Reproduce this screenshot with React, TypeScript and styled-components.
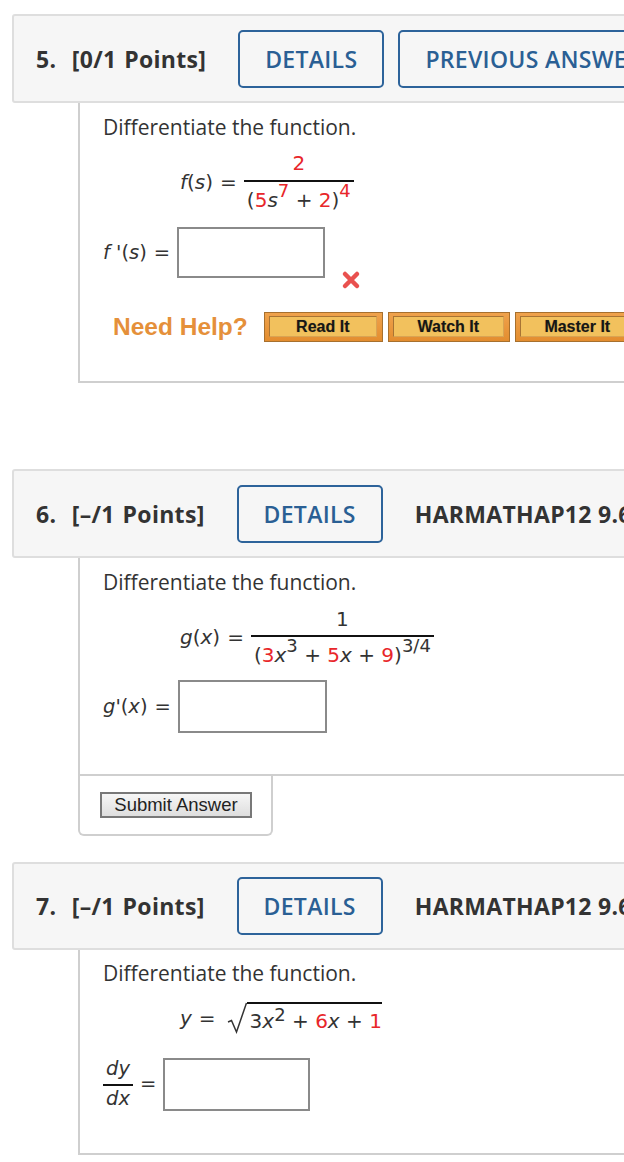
import styled, { createGlobalStyle } from "styled-components";

const GlobalStyle = createGlobalStyle`
  *, *::before, *::after { box-sizing: border-box; }
  html, body { margin: 0; padding: 0; background: #fff; overflow: hidden; }
  body { font-family: "Open Sans", "DejaVu Sans", sans-serif; color: #333; }
`;

const Page = styled.div`
  width: 900px;
  padding: 14px 0 0 12px;
  display: flex;
  flex-direction: column;
`;

const Question = styled.section<{ $after: number }>`
  display: flex;
  flex-direction: column;
  margin-bottom: ${(p) => p.$after}px;
`;

const Header = styled.header<{ $h: number }>`
  display: flex;
  align-items: center;
  height: ${(p) => p.$h}px;
  padding-left: 22px;
  background: #f6f6f6;
  border: 2px solid #dedede;
  border-radius: 3px;
  white-space: nowrap;
`;

const Title = styled.h2`
  margin: 0 32px 0 0;
  font-size: 23px;
  font-weight: 700;
  letter-spacing: 0.3px;
  word-spacing: 1.5px;
  color: #333;
  white-space: pre;
`;

const HeaderButton = styled.button`
  height: 58px;
  padding: 0 25px;
  margin-right: 14px;
  background: transparent;
  border: 2px solid #2d639a;
  border-radius: 5px;
  font-family: "Open Sans", sans-serif;
  font-size: 23px;
  font-weight: 600;
  letter-spacing: 0.3px;
  color: #2a5f94;
`;

const Source = styled.span`
  margin-left: 18px;
  font-size: 23px;
  font-weight: 700;
  letter-spacing: 0.3px;
  color: #333;
`;

const Body = styled.div<{ $top: number; $bottom: number }>`
  margin-left: 66px;
  padding: ${(p) => p.$top}px 0 ${(p) => p.$bottom}px 23px;
  border-left: 2px solid #cfcfcf;
  border-bottom: 2px solid #cfcfcf;
  display: flex;
  flex-direction: column;
`;

const Prompt = styled.p`
  margin: 0;
  font-size: 21px;
  line-height: 24px;
  color: #333;
`;

const MathRow = styled.div<{ $top: number; $indent: number }>`
  display: flex;
  align-items: center;
  margin-top: ${(p) => p.$top}px;
  padding-left: ${(p) => p.$indent}px;
  font-family: "DejaVu Sans", Verdana, sans-serif;
  font-size: 20px;
  line-height: 26px;
  color: #333;
  white-space: pre;
`;

const Eq = styled.span`
  margin: 0 7px;
`;

const V = styled.i`
  font-style: italic;
`;

const Red = styled.span`
  color: #e8262a;
`;

const Sup = styled.sup<{ $raise?: number }>`
  font-size: 18px;
  line-height: 0;
  vertical-align: ${(p) => p.$raise ?? 0.55}em;
`;

const Frac = styled.span`
  display: inline-flex;
  flex-direction: column;
  align-items: stretch;
`;

const Num = styled.span<{ $pad: number }>`
  padding: 0 3px ${(p) => p.$pad}px;
  text-align: center;
  border-bottom: 2px solid #111;
`;

const Den = styled.span<{ $pad: number }>`
  padding: ${(p) => p.$pad}px 3px 0;
  text-align: center;
`;

const Radical = styled.span`
  display: inline-flex;
  align-items: flex-end;
  margin-left: 4px;
`;

const Radicand = styled.span`
  border-top: 2px solid #111;
  padding: 4px 0 0 3px;
`;

const AnswerRow = styled.div<{ $top: number }>`
  display: flex;
  align-items: center;
  margin-top: ${(p) => p.$top}px;
  font-family: "DejaVu Sans", Verdana, sans-serif;
  font-size: 19.5px;
  line-height: 26px;
  color: #333;
  white-space: pre;
`;

const AnswerBox = styled.div<{ $w: number; $h: number }>`
  width: ${(p) => p.$w}px;
  height: ${(p) => p.$h}px;
  border: 2px solid #8a8a8a;
  background: #fff;
`;

const WrongMark = styled.svg`
  align-self: flex-end;
  margin: 0 0 -12px 16px;
`;

const HelpRow = styled.div`
  display: flex;
  align-items: center;
  margin-top: 34px;
  padding-left: 10px;
`;

const HelpLabel = styled.span`
  font-family: "Liberation Sans", Arial, sans-serif;
  font-size: 24.5px;
  font-weight: 700;
  color: #e5903a;
  margin-right: 16px;
`;

const HelpButton = styled.button<{ $w: number }>`
  display: flex;
  width: ${(p) => p.$w}px;
  height: 30px;
  margin-right: 5px;
  padding: 3px 5px 4px 4px;
  border: 1px solid #a7702e;
  background: linear-gradient(#efa24c, #e38d2f);
  flex-shrink: 0;
`;

const HelpInner = styled.span`
  flex: 1;
  display: flex;
  align-items: center;
  justify-content: center;
  border: 1px solid #a87434;
  border-right-color: #d9a453;
  border-bottom-color: #d9a453;
  background: #f2c15d;
  font-family: "Liberation Sans", Arial, sans-serif;
  font-size: 16px;
  font-weight: 700;
  color: #161616;
  text-shadow: 0 0 1px rgba(0, 0, 0, 0.3);
  white-space: nowrap;
  overflow: hidden;
`;

const Footer = styled.div`
  margin-left: 66px;
  width: 195px;
  padding: 16px 0 16px 20px;
  border: 2px solid #cfcfcf;
  border-top: none;
  border-radius: 0 0 6px 6px;
`;

const SubmitButton = styled.button`
  width: 152px;
  height: 26px;
  padding: 0;
  border: 2px solid #787878;
  background: linear-gradient(#f6f6f6, #dedede);
  font-family: "Liberation Sans", Arial, sans-serif;
  font-size: 18.5px;
  line-height: 20px;
  color: #222;
`;

export default function App() {
  return (
    <>
      <GlobalStyle />
      <Page>
        <Question $after={86}>
          <Header $h={89}>
            <Title>{"5.  [0/1 Points]"}</Title>
            <HeaderButton>DETAILS</HeaderButton>
            <HeaderButton>PREVIOUS ANSWERS</HeaderButton>
          </Header>
          <Body $top={12} $bottom={39}>
            <Prompt>Differentiate the function.</Prompt>
            <MathRow $top={11} $indent={77}>
              <V>f</V>(<V>s</V>)<Eq>=</Eq>
              <Frac>
                <Num $pad={4}>
                  <Red>2</Red>
                </Num>
                <Den $pad={5}>
                  (<Red>5</Red>
                  <V>s</V>
                  <Sup>
                    <Red>7</Red>
                  </Sup>{" "}
                  + <Red>2</Red>)
                  <Sup>
                    <Red>4</Red>
                  </Sup>
                </Den>
              </Frac>
            </MathRow>
            <AnswerRow $top={14}>
              <V>f</V> '(<V>s</V>)<Eq>=</Eq>
              <AnswerBox $w={148} $h={51} />
              <WrongMark width="20" height="20" viewBox="0 0 20 20">
                <path
                  d="M4 4 L16 16 M16 4 L4 16"
                  stroke="#e9514f"
                  strokeWidth="4.5"
                  strokeLinecap="round"
                />
              </WrongMark>
            </AnswerRow>
            <HelpRow>
              <HelpLabel>Need Help?</HelpLabel>
              <HelpButton $w={119}>
                <HelpInner>Read It</HelpInner>
              </HelpButton>
              <HelpButton $w={122}>
                <HelpInner>Watch It</HelpInner>
              </HelpButton>
              <HelpButton $w={126}>
                <HelpInner>Master It</HelpInner>
              </HelpButton>
            </HelpRow>
          </Body>
        </Question>

        <Question $after={26}>
          <Header $h={89}>
            <Title>{"6.  [–/1 Points]"}</Title>
            <HeaderButton>DETAILS</HeaderButton>
            <Source>HARMATHAP12 9.6.013.</Source>
          </Header>
          <Body $top={12} $bottom={41}>
            <Prompt>Differentiate the function.</Prompt>
            <MathRow $top={12} $indent={77}>
              <V>g</V>(<V>x</V>)<Eq>=</Eq>
              <Frac>
                <Num $pad={3}>1</Num>
                <Den $pad={5}>
                  (<Red>3</Red>
                  <V>x</V>
                  <Sup>3</Sup> + <Red>5</Red>
                  <V>x</V> + <Red>9</Red>)<Sup>3/4</Sup>
                </Den>
              </Frac>
            </MathRow>
            <AnswerRow $top={12}>
              <V>g</V>'(<V>x</V>)<Eq>=</Eq>
              <AnswerBox $w={149} $h={53} />
            </AnswerRow>
          </Body>
          <Footer>
            <SubmitButton>Submit Answer</SubmitButton>
          </Footer>
        </Question>

        <Question $after={0}>
          <Header $h={88}>
            <Title>{"7.  [–/1 Points]"}</Title>
            <HeaderButton>DETAILS</HeaderButton>
            <Source>HARMATHAP12 9.6.019.</Source>
          </Header>
          <Body $top={11} $bottom={41}>
            <Prompt>Differentiate the function.</Prompt>
            <MathRow $top={17} $indent={77}>
              <V>y</V>
              <Eq>=</Eq>
              <Radical>
                <svg width="20" height="32" viewBox="0 0 20 32">
                  <path
                    d="M1 20 L4.5 18.5 L9.5 30 L19.5 1"
                    fill="none"
                    stroke="#333"
                    strokeWidth="1.5"
                  />
                </svg>
                <Radicand>
                  3<V>x</V>
                  <Sup $raise={0.4}>2</Sup> + <Red>6</Red>
                  <V>x</V> + <Red>1</Red>
                </Radicand>
              </Radical>
            </MathRow>
            <AnswerRow $top={22}>
              <Frac>
                <Num $pad={2}>
                  <V>dy</V>
                </Num>
                <Den $pad={0}>
                  <V>dx</V>
                </Den>
              </Frac>
              <Eq>=</Eq>
              <AnswerBox $w={147} $h={53} />
            </AnswerRow>
          </Body>
        </Question>
      </Page>
    </>
  );
}
